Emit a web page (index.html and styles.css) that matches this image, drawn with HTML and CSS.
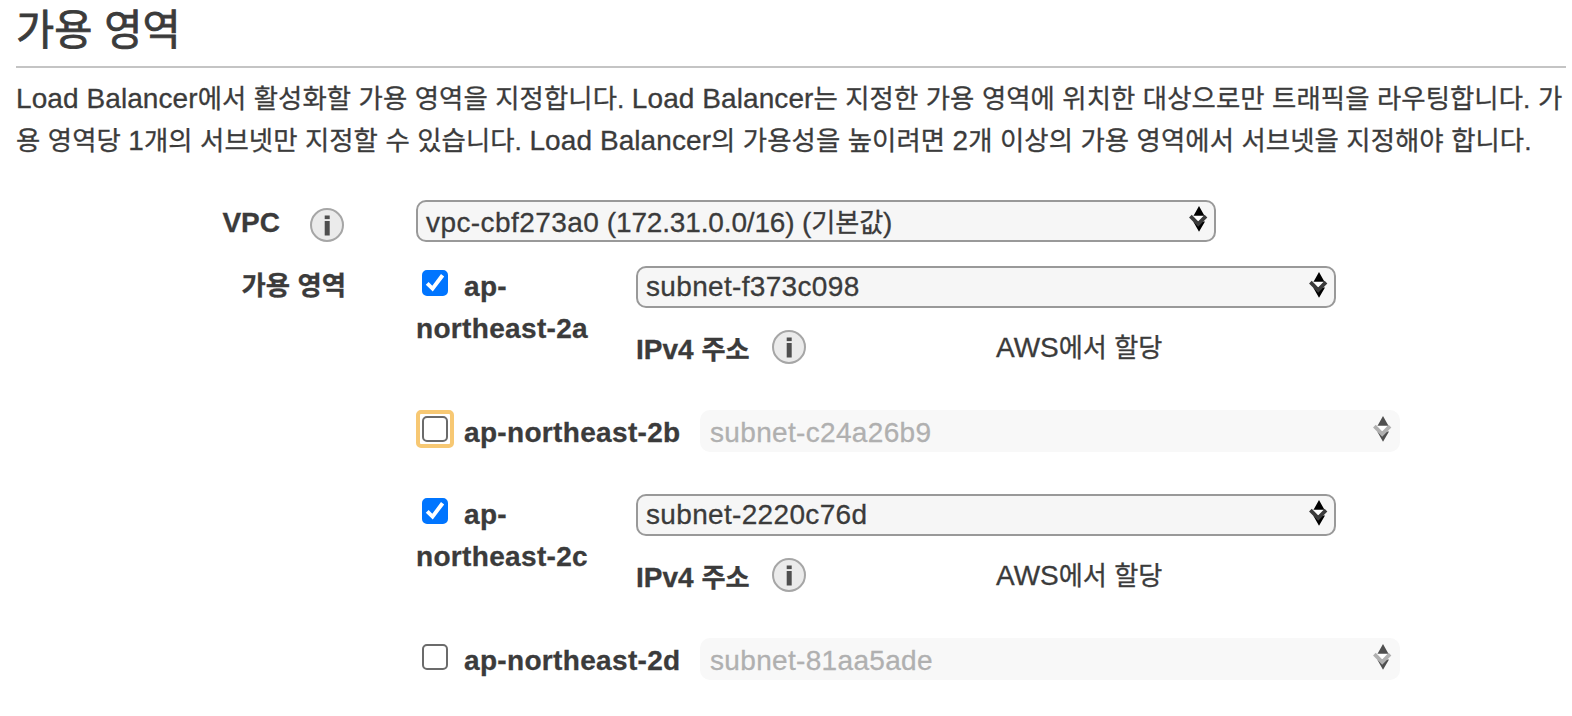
FILE: index.html
```
<!DOCTYPE html>
<html lang="ko">
<head>
    <meta charset="UTF-8">
    <meta name="viewport" content="width=device-width, initial-scale=1.0">
    <title>가용 영역</title>
    <link rel="stylesheet" href="styles.css">
</head>
<body>
    <!-- Shared icons -->
    <svg class="icon-defs" width="0" height="0">
        <symbol id="icon-info" viewBox="0 0 34 34">
            <circle cx="17" cy="17" r="16" fill="#ebebeb" stroke="#a6a6a6" stroke-width="2"/>
            <rect x="14.7" y="7.5" width="5" height="3.6" fill="#4f4f4f"/>
            <rect x="14.7" y="13" width="5" height="14.5" fill="#4f4f4f"/>
        </symbol>
        <symbol id="icon-arrows" viewBox="0 0 19 26">
            <path class="arrow-solid" d="M10 0l5.6 10H4.4zM4.2 15.5h11.8L10 25.8z"/>
            <path class="arrow-gap" d="M4 9.8h11l-6 6z"/>
            <path class="arrow-line" d="M1.4 10.2l7.8 7.8 7.8-7.8"/>
        </symbol>
    </svg>

    <main class="section">
        <h1>가용 영역</h1>
        <div class="description">
            <p class="line-first"><span class="en">Load Balancer</span>에서 활성화할 가용 영역을 지정합니다. <span class="en">Load Balancer</span>는 지정한 가용 영역에 위치한 대상으로만 트래픽을 라우팅합니다. 가</p>
            <p class="line-second">용 영역당 <span class="en">1</span>개의 서브넷만 지정할 수 있습니다. <span class="en">Load Balancer</span>의 가용성을 높이려면 <span class="en">2</span>개 이상의 가용 영역에서 서브넷을 지정해야 합니다.</p>
        </div>

        <form>
            <div class="form-row vpc-row">
                <div class="form-label">
                    <span class="en">VPC</span>
                    <svg class="info"><use href="#icon-info"/></svg>
                </div>
                <div class="select vpc-select">
                    <span class="vpc-id">vpc-cbf273a0</span> (172.31.0.0/16) (<span class="ko">기본값</span>)
                    <svg class="arrows"><use href="#icon-arrows"/></svg>
                </div>
            </div>

            <div class="form-row">
                <div class="form-label zone-label">가용 영역</div>
                <div class="zones">
                    <div class="zone">
                        <label class="zone-name narrow"><input type="checkbox" checked>ap-<br>northeast-2a</label>
                        <div class="zone-detail">
                            <div class="select">
                                <span>subnet-f373c098</span>
                                <svg class="arrows"><use href="#icon-arrows"/></svg>
                            </div>
                            <div class="address">
                                <span class="address-label">IPv4 <span class="ko">주소</span></span>
                                <svg class="info"><use href="#icon-info"/></svg>
                                <span class="address-value">AWS<span class="ko">에서 할당</span></span>
                            </div>
                        </div>
                    </div>

                    <div class="zone off">
                        <label class="zone-name"><input type="checkbox" class="focused">ap-northeast-2b</label>
                        <div class="select disabled">
                            <span>subnet-c24a26b9</span>
                            <svg class="arrows"><use href="#icon-arrows"/></svg>
                        </div>
                    </div>

                    <div class="zone">
                        <label class="zone-name narrow"><input type="checkbox" checked>ap-<br>northeast-2c</label>
                        <div class="zone-detail">
                            <div class="select">
                                <span>subnet-2220c76d</span>
                                <svg class="arrows"><use href="#icon-arrows"/></svg>
                            </div>
                            <div class="address">
                                <span class="address-label">IPv4 <span class="ko">주소</span></span>
                                <svg class="info"><use href="#icon-info"/></svg>
                                <span class="address-value">AWS<span class="ko">에서 할당</span></span>
                            </div>
                        </div>
                    </div>

                    <div class="zone off">
                        <label class="zone-name"><input type="checkbox">ap-northeast-2d</label>
                        <div class="select disabled">
                            <span>subnet-81aa5ade</span>
                            <svg class="arrows"><use href="#icon-arrows"/></svg>
                        </div>
                    </div>
                </div>
            </div>
        </form>
    </main>
</body>
</html>
```
FILE: styles.css
```
* {
    box-sizing: border-box;
}

body {
    margin: 0;
    background: #fff;
    color: #3b3b3b;
    font-family: "Liberation Sans", "Noto Sans CJK KR", sans-serif;
    font-size: 28px;
    line-height: 42px;
    -webkit-text-stroke: 0.3px;
    overflow: hidden;
}

h1, p {
    margin: 0;
    font-weight: normal;
}

svg {
    display: block;
    flex: none;
}

.icon-defs {
    position: absolute;
}

.section {
    padding: 0 6px 0 16px;
}

h1 {
    height: 68px;
    border-bottom: 2px solid #c4c4c4;
    font-size: 41.5px;
    line-height: 62px;
    letter-spacing: 0.1px;
    -webkit-text-stroke: 0.8px;
    white-space: nowrap;
}

.description {
    padding-top: 10px;
    font-size: 26.4px;
    letter-spacing: 0.08px;
    white-space: nowrap;
}

.description p {
    height: 42px;
}

.en {
    font-size: 28px;
}

.ko {
    font-size: 26.2px;
}

/* Form rows */
.form-row {
    display: flex;
    gap: 70px;
}

.vpc-row {
    height: 66px;
    margin-top: 38px;
}

.form-label {
    display: flex;
    justify-content: flex-end;
    gap: 30px;
    width: 330px;
    font-weight: bold;
}

.vpc-row .form-label {
    padding-right: 2px;
}

.vpc-row .en {
    padding-top: 2px;
}

.zone-label {
    margin-top: -1px;
    font-size: 26.4px;
}

.info {
    width: 34px;
    height: 34px;
}

.vpc-row .info {
    margin-top: 8px;
}

/* Select boxes */
.select {
    position: relative;
    flex: none;
    width: 700px;
    height: 42px;
    padding-left: 8px;
    border: 2px solid #999;
    border-radius: 10px;
    background: #f6f6f6;
    line-height: 37px;
    letter-spacing: 0.33px;
    white-space: nowrap;
}

.vpc-select {
    width: 800px;
    line-height: 41px;
    letter-spacing: -0.15px;
}

.vpc-id {
    letter-spacing: 0.42px;
}

.arrows {
    position: absolute;
    top: 4px;
    right: 6px;
    width: 19px;
    height: 26px;
    fill: #000;
    stroke: #3b3b3b;
}

.arrow-solid {
    stroke: none;
}

.arrow-gap {
    fill: #fff;
    stroke: none;
}

.arrow-line {
    fill: none;
    stroke-width: 3.8;
}

.disabled {
    border-color: #f8f8f8;
    background: #f8f8f8;
    color: #b0b0b0;
    line-height: 41px;
}

.disabled .arrows {
    fill: #4f4f4f;
    stroke: #b0b0b0;
}

/* Availability zones */
.zone {
    display: flex;
    height: 144px;
}

.zone.off {
    height: 84px;
}

.zone-name {
    width: 284px;
    font-weight: bold;
    letter-spacing: 0.33px;
    white-space: nowrap;
}

.off .zone-name {
    padding-top: 2px;
}

.zone-name.narrow {
    width: 220px;
}

input[type="checkbox"] {
    appearance: none;
    position: relative;
    width: 26px;
    height: 26px;
    margin: 0 16px 0 6px;
    border: 2px solid #6b6b6b;
    border-radius: 5px;
    background: #fff;
    vertical-align: 0;
}

input[type="checkbox"]:checked {
    border-color: #0075ff;
    background: #0075ff;
}

input[type="checkbox"]:checked::after {
    content: "";
    position: absolute;
    inset: -2px;
    background: #fff;
    clip-path: polygon(3.8px 14.8px, 6.6px 11.9px, 10.3px 15.8px, 19px 4px, 22.2px 6.4px, 10.8px 21.5px);
}

/* Focus ring */
.focused::before {
    content: "";
    position: absolute;
    inset: -8px;
    border: 4px solid #f7c873;
    border-radius: 5px;
}

.address {
    display: flex;
    margin-top: 22px;
    letter-spacing: 0;
}

.address-label {
    width: 136px;
    margin-top: -1px;
    font-weight: bold;
}

.address-value {
    margin-top: -3px;
    margin-left: 190px;
}
```
